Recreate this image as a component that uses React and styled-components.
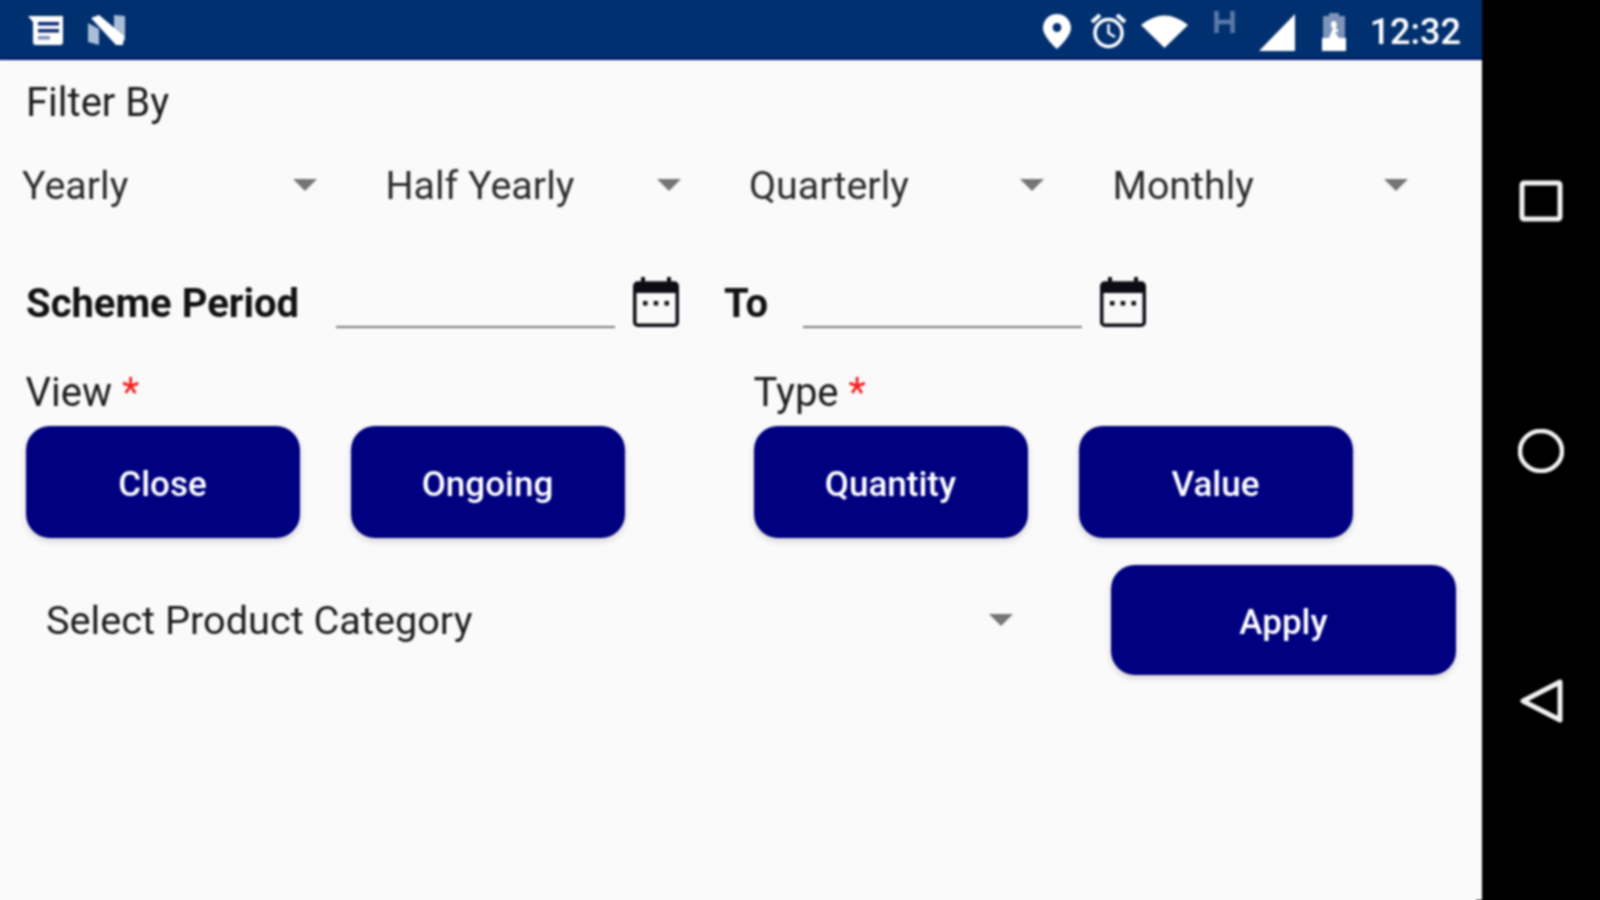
import React from "react";
import styled, { createGlobalStyle } from "styled-components";

const Global = createGlobalStyle`
  html, body { margin: 0; padding: 0; background: #000; }
  body { font-family: Roboto, "Liberation Sans", sans-serif; }
`;

const Device = styled.div`
  display: flex;
  width: 1600px;
  height: 900px;
  filter: blur(0.8px);
`;
const Screen = styled.div`
  width: 1482px;
  background: #fafafa;
  box-shadow: -6px 6px 0 #fafafa;
  display: flex;
  flex-direction: column;
`;
const StatusBar = styled.div`
  height: 58px;
  background: #013070;
  border-bottom: 2px solid #00106a;
  box-shadow: 0 -6px 0 #013070, -6px 0 0 #013070;
  display: flex;
  align-items: flex-start;
  color: #fff;
`;
const NotifyIcons = styled.div`
  display: flex;
  gap: 24px;
  padding: 15px 0 0 28px;
`;
const SystemIcons = styled.div`
  margin-left: auto;
  display: flex;
  align-items: flex-start;
  padding: 13px 21px 0 0;
`;
const Clock = styled.span`
  font-size: 36px;
  font-weight: 500;
  line-height: 38px;
  margin-left: 24px;
`;
const Slot = styled.span`
  display: block;
  margin-left: ${(p) => p.$gap || 0}px;
  margin-top: ${(p) => p.$top || 0}px;
  svg { display: block; }
`;
const Heading = styled.div`
  height: 84px;
  line-height: 86px;
  padding-left: 26px;
  font-size: 40px;
  color: #1c1c1c;
`;
const DropdownRow = styled.div`
  height: 82px;
  padding-left: 22px;
  display: flex;
  gap: 68.5px;
`;
const Dropdown = styled.div`
  width: 295px;
  display: flex;
  align-items: center;
  justify-content: space-between;
  font-size: 39.4px;
  color: #2c2c2c;
`;
const Caret = styled.span`
  width: 0;
  height: 0;
  border-left: 12px solid transparent;
  border-right: 12px solid transparent;
  border-top: 12px solid #757575;
`;
const PeriodRow = styled.div`
  margin-top: 50px;
  height: 52px;
  padding-left: 26px;
  display: flex;
  align-items: center;
`;
const PeriodLabel = styled.span`
  font-size: 40px;
  font-weight: 700;
  color: #111;
  padding-top: 2px;
  width: ${(p) => p.$w}px;
`;
const DateLine = styled.span`
  width: 279px;
  height: 50px;
  border-bottom: 2px solid #7c7c7c;
`;
const Calendar = styled.svg`
  width: 46px;
  height: 50px;
  margin-left: 18px;
  margin-right: ${(p) => p.$after || 0}px;
`;
const Groups = styled.div`
  margin-top: 42px;
  padding-left: 25.5px;
  display: flex;
  gap: 129px;
`;
const Group = styled.div`
  display: flex;
  flex-direction: column;
  gap: 12px;
`;
const FieldLabel = styled.div`
  height: 44px;
  line-height: 46px;
  font-size: 40px;
  color: #1c1c1c;
`;
const Star = styled.span`
  color: #f41c1c;
  margin-left: 10px;
`;
const ButtonRow = styled.div`
  display: flex;
  gap: 51px;
`;
const ActionButton = styled.button`
  width: ${(p) => p.$w || 274}px;
  height: ${(p) => p.$h || 112}px;
  border: 0;
  border-radius: 24px;
  background: #000080;
  color: #fff;
  font-family: inherit;
  font-size: 35px;
  font-weight: 500;
  padding: 4px 0 0;
  box-shadow: 0 3px 6px rgba(0, 0, 0, 0.16);
`;
const BottomRow = styled.div`
  margin-top: 27px;
  padding-left: 46px;
  display: flex;
  gap: 98px;
`;
const CategorySelect = styled.div`
  width: 967px;
  display: flex;
  align-items: center;
  justify-content: space-between;
  font-size: 39.7px;
  color: #1c1c1c;
`;
const NavBar = styled.div`
  width: 118px;
  background: #000;
  display: flex;
  flex-direction: column;
  align-items: center;
  gap: 206px;
  padding-top: 179px;
  box-sizing: border-box;
`;
const NavIcon = styled.svg`
  width: 46px;
  height: 44px;
  display: block;
`;

const CalendarIcon = ({ after }) => (
  <Calendar $after={after} viewBox="0 0 46 50">
    <rect x="1.75" y="6" width="42.5" height="42.25" rx="3" fill="#fafafa" stroke="#0c0c14" strokeWidth="3.5" />
    <rect x="1.5" y="6" width="43" height="10" fill="#0c0c14" />
    <rect x="8" y="0" width="4" height="9" fill="#0c0c14" />
    <rect x="34" y="0" width="4" height="9" fill="#0c0c14" />
    <rect x="10" y="24" width="4.5" height="4.5" fill="#111" />
    <rect x="20.7" y="24" width="4.5" height="4.5" fill="#111" />
    <rect x="31.5" y="24" width="4.5" height="4.5" fill="#111" />
  </Calendar>
);

export default function App() {
  return (
    <Device>
      <Global />
      <Screen>
        <StatusBar>
          <NotifyIcons>
            <svg width="36" height="30" viewBox="0 0 36 30">
              <path d="M0 1H35V27Q35 30 32 30H8Q5 30 5 27V7Z" fill="#fff" />
              <rect x="10" y="7" width="21" height="3.5" fill="#0a2a78" />
              <rect x="10" y="14" width="21" height="3.5" fill="#0a2a78" />
              <rect x="10" y="21" width="12" height="3.5" fill="#7a90bd" />
            </svg>
            <svg width="37" height="30" viewBox="0 0 37 30">
              <path d="M0 8L11 14V30L0 27Z" fill="#a9bdd6" />
              <path d="M26 0L37 1V26L26 18Z" fill="#a9bdd6" />
              <path d="M3 3L11 0L36 21L35 30L28 30Z" fill="#fff" />
            </svg>
          </NotifyIcons>
          <SystemIcons>
            <Slot $top={1}>
              <svg width="28" height="35" viewBox="0 0 29 35" preserveAspectRatio="none">
                <path fillRule="evenodd" fill="#fff" d="M14.5 0C6.5 0 0 6.2 0 14C0 23 14.5 35 14.5 35S29 23 29 14C29 6.2 22.5 0 14.5 0ZM14.5 9A4.5 4.5 0 1 1 14.5 18A4.5 4.5 0 1 1 14.5 9Z" />
              </svg>
            </Slot>
            <Slot $gap={19}>
              <svg width="37" height="36" viewBox="0 0 37 36" fill="none" stroke="#fff">
                <circle cx="18.5" cy="20" r="13.5" strokeWidth="3.5" />
                <path d="M18.5 11V20L25 24" strokeWidth="2.5" />
                <path d="M2 9L10 2M35 9L27 2" strokeWidth="4" />
              </svg>
            </Slot>
            <Slot $gap={14} $top={1}>
              <svg width="47" height="34" viewBox="0 0 47 34">
                <path d="M0 11Q23.5 -8 47 11L23.5 34Z" fill="#fff" />
              </svg>
            </Slot>
            <Slot $gap={26} $top={-2}>
              <svg width="21" height="22" viewBox="0 0 21 22" fill="none" stroke="#5a7aa8" strokeWidth="4.5">
                <path d="M2.5 0V22M18.5 0V22M2.5 11H18.5" />
              </svg>
            </Slot>
            <Slot $gap={24} $top={1}>
              <svg width="36" height="37" viewBox="0 0 36 37">
                <path d="M36 0V37H0Z" fill="#fff" />
              </svg>
            </Slot>
            <Slot $gap={27}>
              <svg width="24" height="38" viewBox="0 0 24 38">
                <path d="M7 0H17V3H23V27H1V3H7Z" fill="#7d93b8" />
                <rect x="0" y="25" width="24" height="13" fill="#fff" />
                <path d="M12 8C8 8 8 14 11 15L7 25H17L13 19H16V16H13C16 14 15 8 12 8Z" fill="#fff" />
              </svg>
            </Slot>
            <Clock>12:32</Clock>
          </SystemIcons>
        </StatusBar>

        <Heading>Filter By</Heading>

        <DropdownRow>
          {["Yearly", "Half Yearly", "Quarterly", "Monthly"].map((t) => (
            <Dropdown key={t}>
              {t}
              <Caret />
            </Dropdown>
          ))}
        </DropdownRow>

        <PeriodRow>
          <PeriodLabel $w={310}>Scheme Period</PeriodLabel>
          <DateLine />
          <CalendarIcon after={45} />
          <PeriodLabel $w={79}>To</PeriodLabel>
          <DateLine />
          <CalendarIcon />
        </PeriodRow>

        <Groups>
          <Group>
            <FieldLabel>View<Star>*</Star></FieldLabel>
            <ButtonRow>
              <ActionButton>Close</ActionButton>
              <ActionButton>Ongoing</ActionButton>
            </ButtonRow>
          </Group>
          <Group>
            <FieldLabel>Type<Star>*</Star></FieldLabel>
            <ButtonRow>
              <ActionButton>Quantity</ActionButton>
              <ActionButton>Value</ActionButton>
            </ButtonRow>
          </Group>
        </Groups>

        <BottomRow>
          <CategorySelect>
            Select Product Category
            <Caret />
          </CategorySelect>
          <ActionButton $w={345} $h={110}>Apply</ActionButton>
        </BottomRow>
      </Screen>

      <NavBar>
        <NavIcon viewBox="0 0 46 44" fill="none" stroke="#f2f2f2" strokeWidth="5" strokeLinejoin="round">
          <rect x="4" y="4" width="38" height="36" rx="2" />
        </NavIcon>
        <NavIcon viewBox="0 0 46 44" fill="none" stroke="#f2f2f2" strokeWidth="4.5">
          <ellipse cx="23" cy="22" rx="21" ry="20" />
        </NavIcon>
        <NavIcon viewBox="0 0 46 44" fill="none" stroke="#f2f2f2" strokeWidth="5" strokeLinejoin="round">
          <path d="M42 3V41L5 22Z" />
        </NavIcon>
      </NavBar>
    </Device>
  );
}
